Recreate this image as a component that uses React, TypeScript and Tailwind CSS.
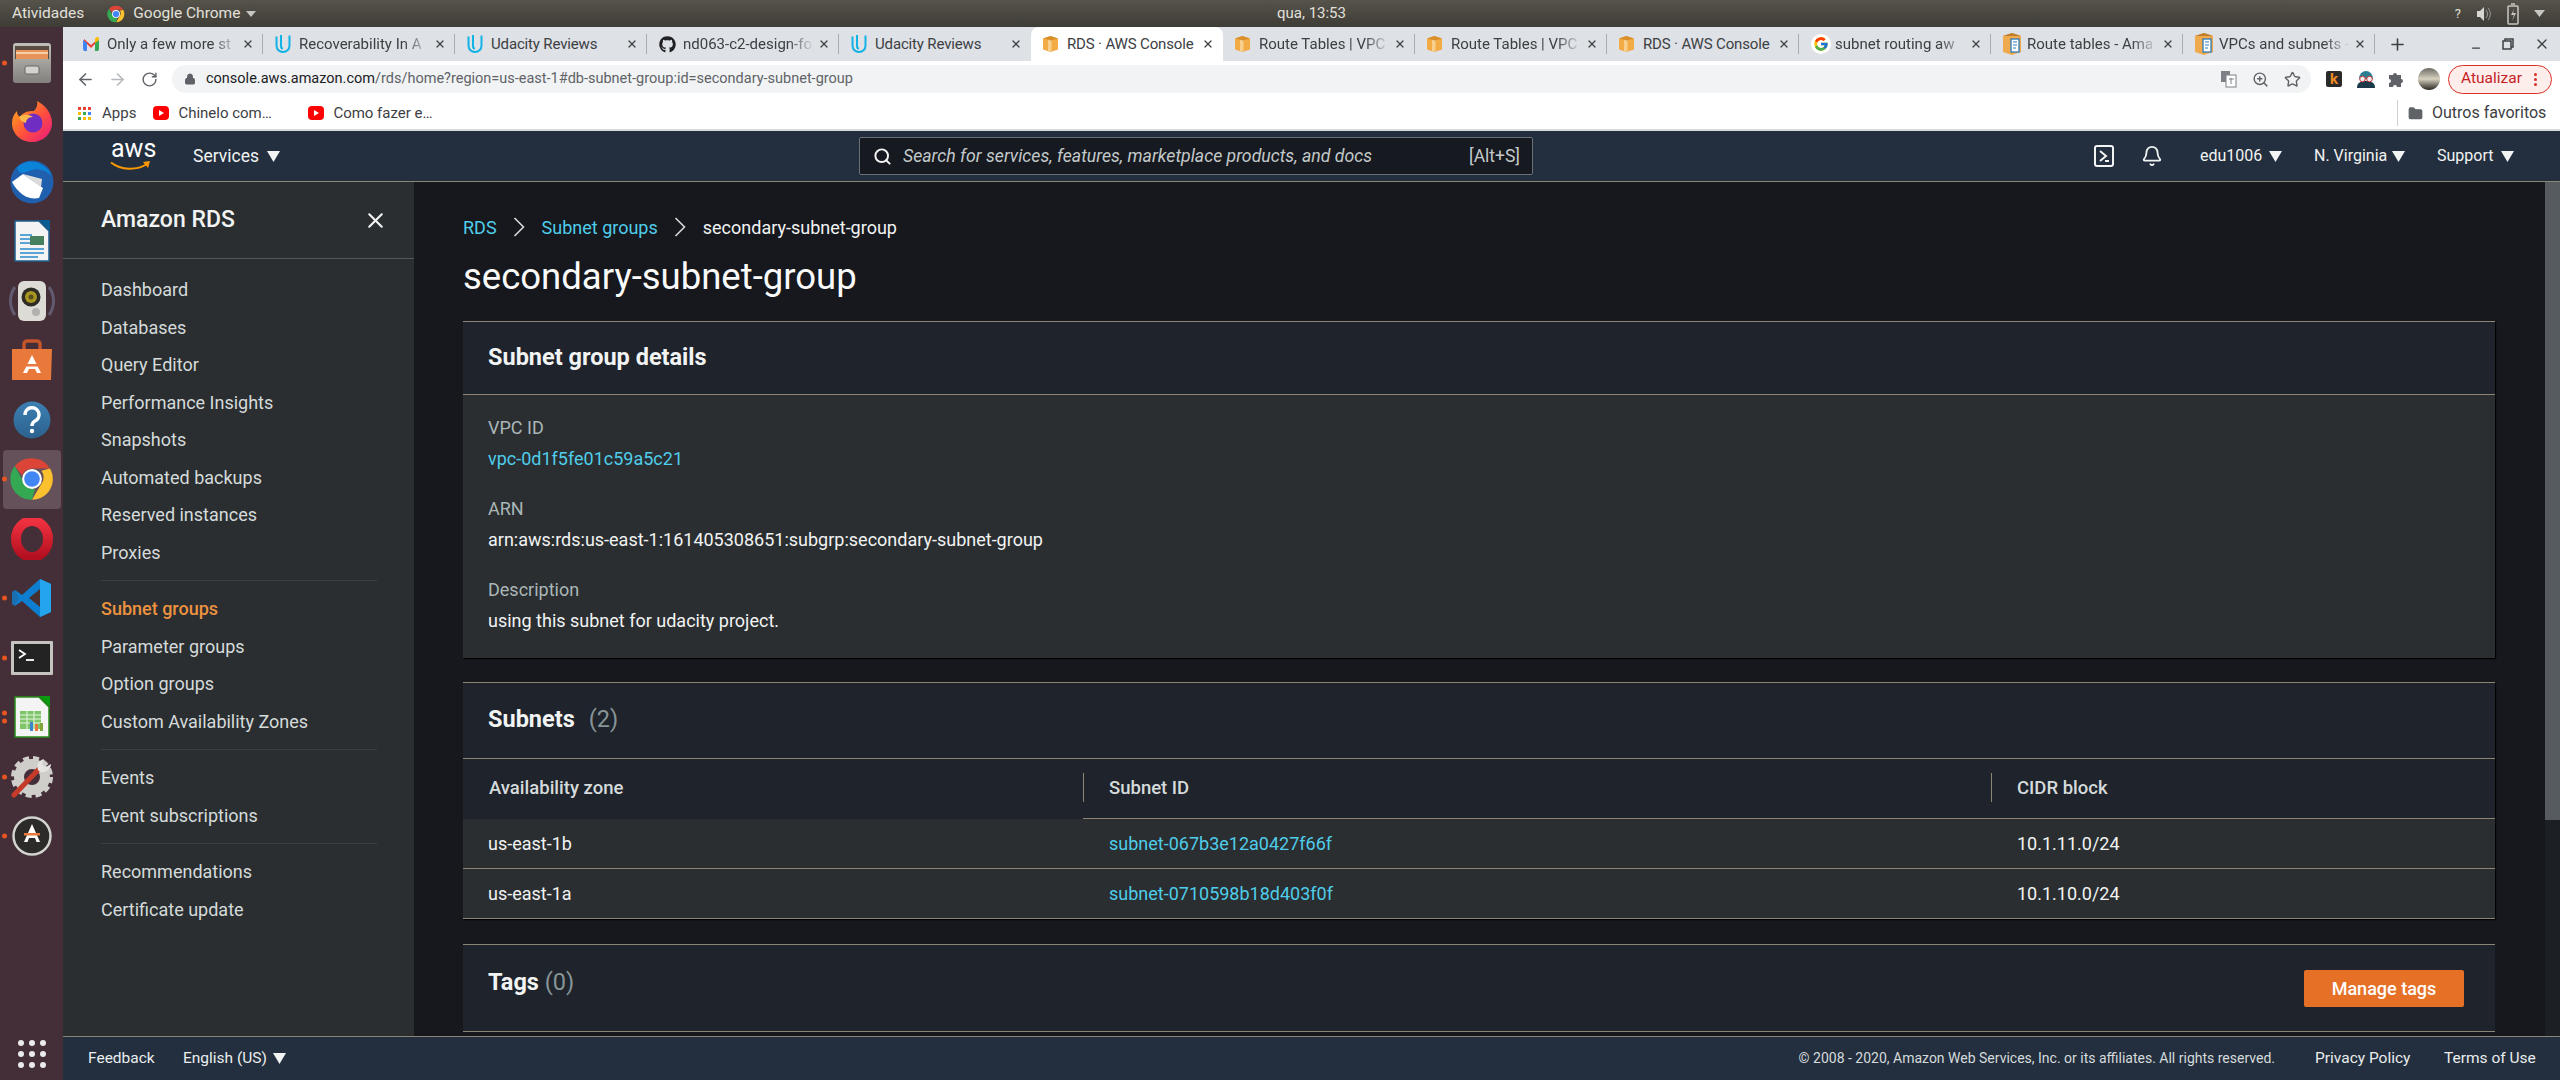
import React from "react";
import { ArrowLeft, ArrowRight, RotateCw, Lock, Star, ZoomIn, X, Plus, Minus, Search, Bell, Folder } from "lucide-react";
import { FaGithub } from "react-icons/fa";
import { FcGoogle } from "react-icons/fc";

const Tri = ({ cls = "" }: { cls?: string }) => (
  <svg width="13" height="11" viewBox="0 0 13 11" className={cls}><path d="M0 0h13L6.500 11z" fill="#f2f3f3" /></svg>
);

const Crumb = () => (
  <svg width="12" height="20" viewBox="0 0 12 20" fill="none" stroke="#d5dbdb" strokeWidth="1.600" className="mx-[16.500px] shrink-0"><path d="M1.500 1l9 9-9 9" /></svg>
);

const Chrome = ({ s = 16 }: { s?: number }) => (
  <svg width={s} height={s} viewBox="0 0 48 48">
    <path d="M24 4a20 20 0 0 1 17.300 10H24a10 10 0 0 0-9.400 6.600L7.500 11.600A20 20 0 0 1 24 4z" fill="#db4437" />
    <path d="M41.300 14A20 20 0 0 1 24 44l9-15.500A10 10 0 0 0 33 16z" fill="#fbc02d" />
    <path d="M24 44A20 20 0 0 1 7.500 11.600L16 27a10 10 0 0 0 11 6.500z" fill="#34a853" />
    <circle cx="24" cy="24" r="9.500" fill="#fff" /><circle cx="24" cy="24" r="7.500" fill="#4285f4" />
  </svg>
);

const Udacity = () => (
  <svg width="16" height="20" viewBox="0 0 16 20" fill="none" stroke="#12b2e4" strokeWidth="2">
    <path d="M1.500 2.500v9c0 4 3 6.500 6.500 6.500s6.500-2.500 6.500-6.500v-10" /><path d="M6 1v11c0 1.500.8 2.500 2 2.500" />
  </svg>
);
const Gmail = () => (
  <svg width="16" height="14" viewBox="0 0 16 14"><path d="M1 14V2l7 6 7-6v12h-3V7L8 11 4 7v7z" fill="#ea4335" /><path d="M0 3v9a2 2 0 0 0 2 2h2V6z" fill="#4285f4" /><path d="M16 3v9a2 2 0 0 1-2 2h-2V6z" fill="#34a853" /><path d="M12 6l4-3V2c0-2-2-2.500-3-1.500L12 1.500z" fill="#fbbc04" /></svg>
);
const BoxIcon = () => (
  <svg width="15" height="16" viewBox="0 0 15 16"><path d="M7.500 0l7.500 2.500v11L7.500 16 0 13.500v-11z" fill="#f2ab45" /><path d="M5 2.500h3.500v13.200L5 15z" fill="#f8cf8e" /><path d="M0 2.500L7.500 0 15 2.500 8 4.500z" fill="#d98f2c" /></svg>
);
const VpcIcon = () => (
  <svg width="18" height="22" viewBox="0 0 18 22"><path d="M9 0l9 3v16l-9 3-9-3V3z" fill="#eeaa4d" /><path d="M9 3l9 0-9-3-9 3z" fill="#bd7d2a" /><rect x="8" y="6" width="8" height="13" fill="#fff" stroke="#2b7cb8" strokeWidth="1.300" /><path d="M10 9h4M10 12h4M10 15h3" stroke="#2b7cb8" /></svg>
);
const Yt = () => (
  <svg width="16" height="14" viewBox="0 0 16 14"><rect width="16" height="14" rx="4" fill="#f00" /><path d="M6 4l5 3-5 3z" fill="#fff" /></svg>
);
const GoogleFav = () => (
  <span className="flex h-[20px] w-[20px] items-center justify-center rounded-full bg-white"><FcGoogle size={16} /></span>
);

const tabs: [string, React.ReactNode][] = [
  ["Only a few more st", <Gmail />],
  ["Recoverability In A", <Udacity />],
  ["Udacity Reviews", <Udacity />],
  ["nd063-c2-design-fo", <FaGithub size={17} color="#202124" />],
  ["Udacity Reviews", <Udacity />],
  ["RDS · AWS Console", <BoxIcon />],
  ["Route Tables | VPC", <BoxIcon />],
  ["Route Tables | VPC", <BoxIcon />],
  ["RDS · AWS Console", <BoxIcon />],
  ["subnet routing aw", <GoogleFav />],
  ["Route tables - Ama", <VpcIcon />],
  ["VPCs and subnets -", <VpcIcon />],
];

const Grad = ({ id, a, b }: { id: string; a: string; b: string }) => (
  <linearGradient id={id} x1="0" y1="0" x2="0" y2="1"><stop offset="0" stopColor={a} /><stop offset="1" stopColor={b} /></linearGradient>
);

const dockIcons: { n: string; dots: number; el: React.ReactNode; active?: boolean }[] = [
  { n: "files", dots: 1, el: (
    <svg width="40" height="40" viewBox="0 0 40 40"><defs><Grad id="f1" a="#c0bfba" b="#82807c" /></defs><rect x="1" y="0" width="38" height="40" rx="3" fill="url(#f1)" /><rect x="3" y="3" width="34" height="13" fill="#5a4c43" /><rect x="4" y="7" width="32" height="9" fill="#e8935a" /><rect x="4" y="9" width="32" height="2" fill="#f6cfa7" /><rect x="13" y="23" width="14" height="8" rx="2" fill="#d5d3cf" stroke="#6a6865" /></svg>
  ) },
  { n: "firefox", dots: 0, el: (
    <svg width="42" height="42" viewBox="0 0 42 42"><defs><linearGradient id="ff" x1="0" y1="0" x2="1" y2="1"><stop offset="0" stopColor="#ffb317" /><stop offset=".55" stopColor="#ff4f3d" /><stop offset="1" stopColor="#e31587" /></linearGradient></defs><path d="M21 41C9 41 1 32 1 22c0-5 2-9 5-12 0 3 1 5 3 6 3-5 8-6 14-6 3-3 4-7 3-10 8 4 15 12 15 22 0 11-9 19-20 19z" fill="url(#ff)" /><circle cx="22" cy="22" r="9.500" fill="#6f2dc1" /><path d="M8 16c4-3 10-3 14 0-5 0-7 3-7 6-4-1-6-3-7-6z" fill="#ffb94a" /></svg>
  ) },
  { n: "thunderbird", dots: 0, el: (
    <svg width="46" height="44" viewBox="0 0 46 44"><circle cx="23" cy="22" r="21.500" fill="#1f5fae" /><path d="M8 8c5-6 12-7 18-6 6 1 14 7 17 14-6-5-13-8-20-6-7 2-13 6-15-2z" fill="#0a84d8" /><path d="M3 22l11-8 20 14-4 10c-10 2-20-3-27-16z" fill="#fff" /><path d="M14 14l19 5-1 8z" fill="#dcdcdc" /></svg>
  ) },
  { n: "writer", dots: 0, el: (
    <svg width="36" height="42" viewBox="0 0 36 42"><path d="M1 1h24l10 10v30H1z" fill="#f4f4f4" stroke="#1d5f8e" strokeWidth="1.500" /><path d="M25 0h11v11z" fill="#0a5c94" /><path d="M6 15h12M6 19h10M6 23h10M6 29h24M6 33h24M6 37h18" stroke="#5ba4d6" strokeWidth="2" /><rect x="16" y="16" width="14" height="9" fill="#47805d" /></svg>
  ) },
  { n: "rhythmbox", dots: 0, el: (
    <svg width="46" height="42" viewBox="0 0 46 42"><path d="M6 7c-6 8-6 20 0 28M40 7c6 8 6 20 0 28" fill="none" stroke="#625a70" strokeWidth="3" /><rect x="9" y="1" width="28" height="40" rx="6" fill="#dcdbd6" /><circle cx="22" cy="17" r="9.500" fill="#2d2b24" /><circle cx="22" cy="17" r="6" fill="#a89522" /><circle cx="22" cy="17" r="2.500" fill="#57501c" /><circle cx="27" cy="32" r="4" fill="#b2b1ad" /></svg>
  ) },
  { n: "store", dots: 0, el: (
    <svg width="42" height="42" viewBox="0 0 42 42"><path d="M13 10V5a3 3 0 0 1 3-3h10a3 3 0 0 1 3 3v5" fill="none" stroke="#c3562b" strokeWidth="3.500" /><path d="M1 10h40l-1 31H1z" fill="#e9793a" /><path d="M21 16l-9 18h4l2-4h6l2 4h4z" fill="#fff" /><rect x="11" y="25" width="20" height="2.500" fill="#e9793a" /></svg>
  ) },
  { n: "help", dots: 0, el: (
    <svg width="38" height="38" viewBox="0 0 38 38"><defs><Grad id="h1" a="#3c80b2" b="#2c618e" /></defs><circle cx="19" cy="19" r="18.500" fill="url(#h1)" /><path d="M12 14a7 7 0 1 1 10 6c-2 1-3 2-3 5" fill="none" stroke="#fff" strokeWidth="3.500" /><circle cx="19" cy="30" r="2.200" fill="#fff" /></svg>
  ) },
  { n: "chrome", dots: 1, active: true, el: <Chrome s={50} /> },
  { n: "opera", dots: 0, el: (
    <svg width="42" height="42" viewBox="0 0 42 42"><defs><Grad id="op" a="#f0313f" b="#b30f20" /></defs><ellipse cx="21" cy="21" rx="16" ry="18" fill="none" stroke="url(#op)" strokeWidth="10" /></svg>
  ) },
  { n: "vscode", dots: 1, el: (
    <svg width="40" height="40" viewBox="0 0 40 40"><path d="M28 1l11 5v28l-11 5L10 23l-7 5-3-2v-12l3-2 7 5z" fill="#0e7fd0" /><path d="M28 1l11 5v28l-11 5z" fill="#25a4ee" /><path d="M28 11L17 20l11 9z" fill="#45302f" /><path d="M3 12l4 8-4 8-3-2v-12z" fill="#45302f" opacity=".2" /></svg>
  ) },
  { n: "terminal", dots: 1, el: (
    <svg width="42" height="34" viewBox="0 0 42 34"><rect width="42" height="34" rx="1" fill="#c4c3c0" /><rect x="3" y="3" width="36" height="28" fill="#232323" /><path d="M8 9l6 4-6 4" fill="none" stroke="#fff" strokeWidth="1.800" /><path d="M15 19h8" stroke="#fff" strokeWidth="1.800" /></svg>
  ) },
  { n: "calc", dots: 2, el: (
    <svg width="36" height="42" viewBox="0 0 36 42"><path d="M1 1h24l10 10v30H1z" fill="#f4f4f4" stroke="#2a8a1a" strokeWidth="1.500" /><path d="M25 0h11v11z" fill="#0b9a0f" /><rect x="6" y="15" width="21" height="18" fill="#7fc66a" /><path d="M6 19h21M6 23h21M6 27h21M13 15v18M20 15v18" stroke="#e8f5e2" /><rect x="16" y="26" width="3" height="9" fill="#3b86c9" /><rect x="21" y="28" width="3" height="7" fill="#e9763a" /><rect x="26" y="27" width="3" height="8" fill="#7ea53a" /></svg>
  ) },
  { n: "tools", dots: 1, el: (
    <svg width="42" height="42" viewBox="0 0 42 42"><circle cx="21" cy="21" r="13" fill="none" stroke="#cfcecb" strokeWidth="10" /><circle cx="21" cy="21" r="19" fill="none" stroke="#cfcecb" strokeWidth="4" strokeDasharray="6 4" /><path d="M3 39L28 13" stroke="#c53b2a" strokeWidth="5" strokeLinecap="round" /><path d="M27 14c-2-5 1-10 6-11l-2 5 4 3 5-3c0 6-6 9-11 8z" fill="#e5e4e1" /></svg>
  ) },
  { n: "update", dots: 1, el: (
    <svg width="42" height="42" viewBox="0 0 42 42"><circle cx="21" cy="21" r="20" fill="#2d2b29" /><circle cx="21" cy="21" r="18.500" fill="none" stroke="#d4d3cf" strokeWidth="2.500" /><path d="M21 9l-8 18h3.500l1.500-4h6l1.500 4H29z" fill="#fff" /><rect x="13" y="18" width="16" height="2.500" fill="#e9793a" /></svg>
  ) },
];

const Nav = ({ t, active }: { t: string; active?: boolean }) => (
  <a className={`flex h-[37.500px] items-center text-[18px] ${active ? "font-medium text-[#ec9240]" : "text-[#d5dbdb]"}`}>{t}</a>
);
const Sep = () => <div className="my-[9px] h-px w-[276px] bg-[#3b3f44]" />;

const Label = ({ t }: { t: string }) => <div className="flex h-[31px] items-center text-[#aab7b8]">{t}</div>;
const Value = ({ t, link }: { t: string; link?: boolean }) => (
  <div className={`flex h-[31px] items-center ${link ? "text-[#4fcdea]" : "text-[#f2f3f3]"}`}>{t}</div>
);

const Row = ({ a, b, c }: { a: string; b: string; c: string }) => (
  <div className="grid h-[50px] grid-cols-[620px_908px_1fr] items-center border-b border-[#8d8474] bg-[#2a2e30] text-[#f2f3f3]">
    <div className="pl-[25px]">{a}</div>
    <div className="pl-[26px] text-[#4fcdea]">{b}</div>
    <div className="pl-[26px]">{c}</div>
  </div>
);

export default function App() {
  return (
    <div className="flex h-[1080px] w-[2560px] flex-col overflow-hidden font-[Roboto,sans-serif] text-[18px]">
      {/* GNOME bar */}
      <div className="relative flex h-[27px] shrink-0 items-center bg-gradient-to-b from-[#56534b] to-[#3e3c36] text-[15.500px] text-[#e2e0da]">
        <span className="ml-[12px]">Atividades</span>
        <span className="ml-[22px]"><Chrome s={20} /></span>
        <span className="ml-[7px]">Google Chrome</span>
        <svg width="10" height="6" viewBox="0 0 10 6" className="ml-[6px]"><path d="M0 0h10L5 6z" fill="#c8c6c0" /></svg>
        <span className="absolute left-[1277px] text-[15px]">qua, 13:53</span>
        <div className="ml-auto flex items-center gap-[15px] pr-[15px]">
          <span className="text-[13px]">?</span>
          <svg width="16" height="16" viewBox="0 0 16 16" fill="#d8d6d0"><path d="M1 5h3l4-4v14l-4-4H1z" /><path d="M10 4c2 2 2 6 0 8M12 2c3 3 3 9 0 12" fill="none" stroke="#9d9b95" /></svg>
          <svg width="12" height="22" viewBox="0 0 12 22" fill="none" stroke="#c8c6c0" strokeWidth="1.500"><rect x="1" y="3" width="10" height="18" rx="1" /><path d="M4 1h4" /><path d="M7 6l-3 6h3l-2 6 4-8H6z" fill="#c8c6c0" stroke="none" /></svg>
          <svg width="11" height="7" viewBox="0 0 11 7"><path d="M0 0h11L5.500 7z" fill="#c8c6c0" /></svg>
        </div>
      </div>

      <div className="flex min-h-0 flex-1">
        {/* Dock */}
        <div className="flex w-[63px] shrink-0 flex-col items-center bg-[#442f38] pt-[6px]">
          {dockIcons.map((d) => (
            <div key={d.n} className={`relative flex h-[59.500px] w-[58px] shrink-0 items-center justify-center rounded-[4px] ${d.active ? "bg-[#65515a]" : ""}`}>
              {d.dots > 0 && (
                <div className="absolute left-[-0.500px] top-1/2 flex -translate-y-1/2 flex-col gap-[3px]">
                  {Array.from({ length: d.dots }).map((_, i) => <span key={i} className="block h-[5px] w-[5px] rounded-full bg-[#e95420]" />)}
                </div>
              )}
              {d.el}
            </div>
          ))}
          <div className="mb-[12px] mt-auto grid grid-cols-3 gap-[5px]">
            {Array.from({ length: 9 }).map((_, i) => <span key={i} className="h-[6px] w-[6px] rounded-full bg-[#ebebeb]" />)}
          </div>
        </div>

        <div className="flex min-w-0 flex-1 flex-col">
          {/* Tabs */}
          <div className="flex h-[34px] shrink-0 items-stretch bg-[#dee1e6] pl-[8px] text-[15px] text-[#3c4043]">
            {tabs.map(([t, ic], i) => {
              const active = i === 5;
              const nextActive = i === 4;
              const full = t.startsWith("RDS") || t === "Udacity Reviews";
              return (
                <div key={i} className={`relative flex w-[192px] shrink-0 items-center pl-[12px] pr-[9px] ${active ? "rounded-t-[8px] bg-white" : ""}`}>
                  <span className="flex w-[24px] shrink-0 items-center">{ic}</span>
                  <span className={`min-w-0 flex-1 whitespace-nowrap ${full ? "tracking-[-0.150px]" : "[mask-image:linear-gradient(to_right,#000_80%,transparent)]"}`}>{t}</span>
                  <X size={12} strokeWidth={2.500} className="ml-[4px] shrink-0 text-[#3c4043]" />
                  {!active && !nextActive && <span className="absolute right-0 top-[7px] h-[20px] w-px bg-[#a9acb1]" />}
                </div>
              );
            })}
            <Plus size={19} strokeWidth={2} className="ml-[13px] mt-[8px] text-[#3c4043]" />
            <div className="ml-auto flex items-center gap-[20px] pr-[10px]">
              <Minus size={12} strokeWidth={2.500} className="mt-[8px] text-[#3c4043]" />
              <svg width="12" height="12" viewBox="0 0 12 12" fill="none" stroke="#3c4043" strokeWidth="1.500"><rect x="1" y="3" width="8" height="8" /><path d="M3 3V1h8v8H9" /></svg>
              <X size={16} strokeWidth={2} className="text-[#3c4043]" />
            </div>
          </div>

          {/* Toolbar */}
          <div className="flex h-[36px] shrink-0 items-center bg-white">
            <ArrowLeft size={19} strokeWidth={2} className="ml-[13px] text-[#5f6368]" />
            <ArrowRight size={19} strokeWidth={2} className="ml-[13px] text-[#b4b7bb]" />
            <RotateCw size={17} strokeWidth={2} className="ml-[14px] text-[#5f6368]" />
            <div className="ml-[14px] flex h-[28px] w-[2139px] items-center rounded-full bg-[#f1f3f4] pl-[12px] pr-[10px]">
              <Lock size={12} fill="#5f6368" className="text-[#5f6368]" />
              <span className="ml-[10px] whitespace-nowrap text-[14.500px] text-[#5f6368]">
                <span className="text-[#202124]">console.aws.amazon.com</span>/rds/home?region=us-east-1#db-subnet-group:id=secondary-subnet-group
              </span>
              <div className="ml-auto flex items-center gap-[15px]">
                <svg width="17" height="18" viewBox="0 0 17 18"><rect x="1" y="1" width="9" height="11" fill="#7d8186" /><rect x="6" y="5" width="10" height="12" fill="#fff" stroke="#7d8186" /><path d="M9 9h5M11 8v6" stroke="#7d8186" /></svg>
                <ZoomIn size={17} className="text-[#5f6368]" />
                <Star size={17} className="text-[#5f6368]" />
              </div>
            </div>
            <div className="ml-[15px] flex h-[16px] w-[16px] items-center justify-center rounded-[2px] bg-[#2a2a2a] text-[15px] font-bold leading-none text-[#ef8a23]">k</div>
            <svg width="18" height="18" viewBox="0 0 18 18" className="ml-[15px]"><path d="M0 18c0-5 3-7 9-7s9 2 9 7z" fill="#1d3a4a" /><path d="M2 9a7 8 0 0 1 14 0z" fill="#2c7f93" /><circle cx="5.500" cy="9" r="2.800" fill="#eee" stroke="#c33" /><circle cx="12.500" cy="9" r="2.800" fill="#eee" stroke="#c33" /></svg>
            <svg width="16" height="16" viewBox="0 0 16 16" fill="#5f6368" className="ml-[14px]"><path d="M0 4h4a2 2 0 1 1 4 0h4v4a2 2 0 1 1 0 4v4H8a2 2 0 1 0-4 0H0v-4a2 2 0 1 0 0-4z" /></svg>
            <div className="ml-[13px] h-[22px] w-[22px] rounded-full bg-gradient-to-b from-[#6f6d68] via-[#d8d2c0] to-[#2e2b26]" />
            <div className="ml-[8px] flex h-[29px] w-[104px] items-center rounded-full border border-[#d93025] bg-[#fdeeec] pl-[12px] text-[15.500px] text-[#c5221f]">
              Atualizar
              <span className="ml-[12px] flex flex-col gap-[2px]">
                <span className="h-[3px] w-[3px] rounded-full bg-[#d93025]" /><span className="h-[3px] w-[3px] rounded-full bg-[#d93025]" /><span className="h-[3px] w-[3px] rounded-full bg-[#d93025]" />
              </span>
            </div>
          </div>

          {/* Bookmarks */}
          <div className="flex h-[34px] shrink-0 items-center border-b-2 border-[#d9dadb] bg-white text-[15px] text-[#3c4043]">
            <div className="ml-[15px] grid grid-cols-3 gap-[2px]">
              {["#ea4335", "#ea4335", "#ea4335", "#fbbc04", "#34a853", "#4285f4", "#34a853", "#fbbc04", "#fbbc04"].map((c, i) => <span key={i} className="h-[3px] w-[3px]" style={{ background: c }} />)}
            </div>
            <span className="ml-[11px]">Apps</span>
            <span className="ml-[17px] flex"><Yt /></span>
            <span className="ml-[9px] w-[99px] whitespace-nowrap">Chinelo com…</span>
            <span className="ml-[31px] flex"><Yt /></span>
            <span className="ml-[9px] whitespace-nowrap">Como fazer e…</span>
            <div className="ml-auto flex items-center pr-[14px]">
              <span className="mr-[10px] h-[26px] w-px bg-[#cfd1d4]" />
              <Folder size={15} fill="#5f6368" className="text-[#5f6368]" />
              <span className="ml-[9px] w-[114px] whitespace-nowrap text-[16px]">Outros favoritos</span>
            </div>
          </div>

          {/* AWS nav */}
          <div className="flex h-[51px] shrink-0 items-center border-b border-[#8a8678] bg-[#232f3e] text-[16px] text-[#f2f3f3]">
            <div className="relative ml-[47px] h-[30px] w-[41px] shrink-0">
              <span className="absolute left-[1px] top-[-7px] text-[25px] font-normal leading-[30px] text-white">aws</span>
              <svg width="42" height="11" viewBox="0 0 42 11" className="absolute bottom-[-1px] left-0"><path d="M1 1.500c10 8 26 8 36 1.500" fill="none" stroke="#f90" strokeWidth="2" /><path d="M33 1l7-1-2 7z" fill="#f90" /></svg>
            </div>
            <span className="ml-[42px] w-[66px] whitespace-nowrap text-[17.500px]">Services</span>
            <Tri cls="ml-[8px]" />
            <div className="ml-[579px] flex h-[38px] w-[674px] items-center rounded-[2px] border border-[#687078] bg-[#16191f] pl-[13px] pr-[12px]">
              <Search size={19} strokeWidth={2.500} className="text-[#f2f3f3]" />
              <span className="ml-[11px] text-[17.700px] italic text-[#c3c9ca]">Search for services, features, marketplace products, and docs</span>
              <span className="ml-auto text-[17.500px] text-[#c3c9ca]">[Alt+S]</span>
            </div>
            <svg width="20" height="22" viewBox="0 0 20 22" fill="none" stroke="#f2f3f3" strokeWidth="2" className="ml-auto"><rect x="1" y="1" width="18" height="20" rx="2" /><path d="M6 6l6 5-6 5M11 16h4" /></svg>
            <Bell size={22} strokeWidth={2} className="ml-[27px]" />
            <span className="ml-[37px] w-[61px] whitespace-nowrap">edu1006</span>
            <Tri cls="ml-[8px]" />
            <span className="ml-[32px] w-[70px] whitespace-nowrap">N. Virginia</span>
            <Tri cls="ml-[8px]" />
            <span className="ml-[32px] w-[56px] whitespace-nowrap">Support</span>
            <Tri cls="ml-[8px] mr-[46px]" />
          </div>

          {/* Body */}
          <div className="flex min-h-0 flex-1">
            <aside className="w-[351px] shrink-0 bg-[#2a2e30]">
              <div className="flex h-[77px] items-center justify-between border-b border-[#54585d] pl-[38px] pr-[26px]">
                <span className="text-[23px] font-medium text-[#f2f3f3]">Amazon RDS</span>
                <X size={25} strokeWidth={2} className="text-[#f2f3f3]" />
              </div>
              <nav className="pl-[38px] pt-[12px]">
                {["Dashboard", "Databases", "Query Editor", "Performance Insights", "Snapshots", "Automated backups", "Reserved instances", "Proxies"].map((t) => <Nav key={t} t={t} />)}
                <Sep />
                <Nav t="Subnet groups" active />
                {["Parameter groups", "Option groups", "Custom Availability Zones"].map((t) => <Nav key={t} t={t} />)}
                <Sep />
                {["Events", "Event subscriptions"].map((t) => <Nav key={t} t={t} />)}
                <Sep />
                {["Recommendations", "Certificate update"].map((t) => <Nav key={t} t={t} />)}
              </nav>
            </aside>

            <main className="min-w-0 flex-1 overflow-hidden bg-[#16181d] pl-[49px] pr-[50px]">
              <div className="flex h-[64px] items-center pt-[26px] text-[#f2f3f3]">
                <span className="text-[#4fcdea]">RDS</span>
                <Crumb />
                <span className="text-[#4fcdea]">Subnet groups</span>
                <Crumb />
                <span>secondary-subnet-group</span>
              </div>
              <h1 className="mb-[13px] flex h-[62px] items-center text-[36.500px] font-normal text-[#fafafa]">secondary-subnet-group</h1>

              <section className="border-t border-[#8d8474] bg-[#1f232b] shadow-[1px_1px_1px_#000]">
                <div className="flex h-[73px] items-center border-b border-[#8d8474] pl-[25px] text-[23.500px] font-bold text-[#f2f3f3]">Subnet group details</div>
                <div className="h-[263px] bg-[#2a2e30] pl-[25px] pt-[17px]">
                  <Label t="VPC ID" />
                  <Value t="vpc-0d1f5fe01c59a5c21" link />
                  <div className="h-[19px]" />
                  <Label t="ARN" />
                  <Value t="arn:aws:rds:us-east-1:161405308651:subgrp:secondary-subnet-group" />
                  <div className="h-[19px]" />
                  <Label t="Description" />
                  <Value t="using this subnet for udacity project." />
                </div>
              </section>

              <section className="mt-[24px] border-t border-[#8d8474] bg-[#1f232b] shadow-[1px_1px_1px_#000]">
                <div className="flex h-[76px] items-center border-b border-[#8d8474] pb-[2px] pl-[25px] text-[23.500px] font-bold text-[#f2f3f3]">
                  Subnets<span className="ml-[14px] font-normal text-[#879596]">(2)</span>
                </div>
                <div className="grid h-[60px] grid-cols-[620px_908px_1fr] text-[18.500px] font-medium text-[#d5dbdb]">
                  <div className="flex items-center pl-[26px]">Availability zone</div>
                  <div className="relative flex items-center border-b border-[#8d8474] pl-[26px]"><span className="absolute left-0 top-[14px] h-[29px] w-px bg-[#8d8474]" />Subnet ID</div>
                  <div className="relative flex items-center border-b border-[#8d8474] pl-[26px]"><span className="absolute left-0 top-[14px] h-[29px] w-px bg-[#8d8474]" />CIDR block</div>
                </div>
                <Row a="us-east-1b" b="subnet-067b3e12a0427f66f" c="10.1.11.0/24" />
                <Row a="us-east-1a" b="subnet-0710598b18d403f0f" c="10.1.10.0/24" />
              </section>

              <section className="mt-[25px] border-t border-[#8d8474] bg-[#1f232b]">
                <div className="flex h-[87px] items-center justify-between border-b border-[#8d8474] pl-[25px] pr-[31px] text-[23.500px] font-bold text-[#f2f3f3]">
                  <span className="mb-[10px]">Tags <span className="font-normal text-[#879596]">(0)</span></span>
                  <button className="flex h-[37px] w-[160px] items-center justify-center rounded-[2px] bg-[#e57026] text-[18px] font-medium text-white">Manage tags</button>
                </div>
              </section>
            </main>

            <div className="w-[15px] shrink-0 bg-[#1c1f24]"><div className="h-[638px] bg-[#565b60]" /></div>
          </div>

          {/* Footer */}
          <div className="flex h-[44px] shrink-0 items-center border-t border-[#8d8474] bg-[#232f3e] text-[15.500px] text-[#eaeded]">
            <span className="ml-[25px] w-[63px] whitespace-nowrap">Feedback</span>
            <span className="ml-[32px] w-[82px] whitespace-nowrap">English (US)</span>
            <Tri cls="ml-[8px]" />
            <span className="ml-auto whitespace-nowrap text-[14px] text-[#d5dbdb]">© 2008 - 2020, Amazon Web Services, Inc. or its affiliates. All rights reserved.</span>
            <span className="ml-[40px] w-[93px] whitespace-nowrap">Privacy Policy</span>
            <span className="ml-[36px] mr-[27px] w-[89px] whitespace-nowrap">Terms of Use</span>
          </div>
        </div>
      </div>
    </div>
  );
}
